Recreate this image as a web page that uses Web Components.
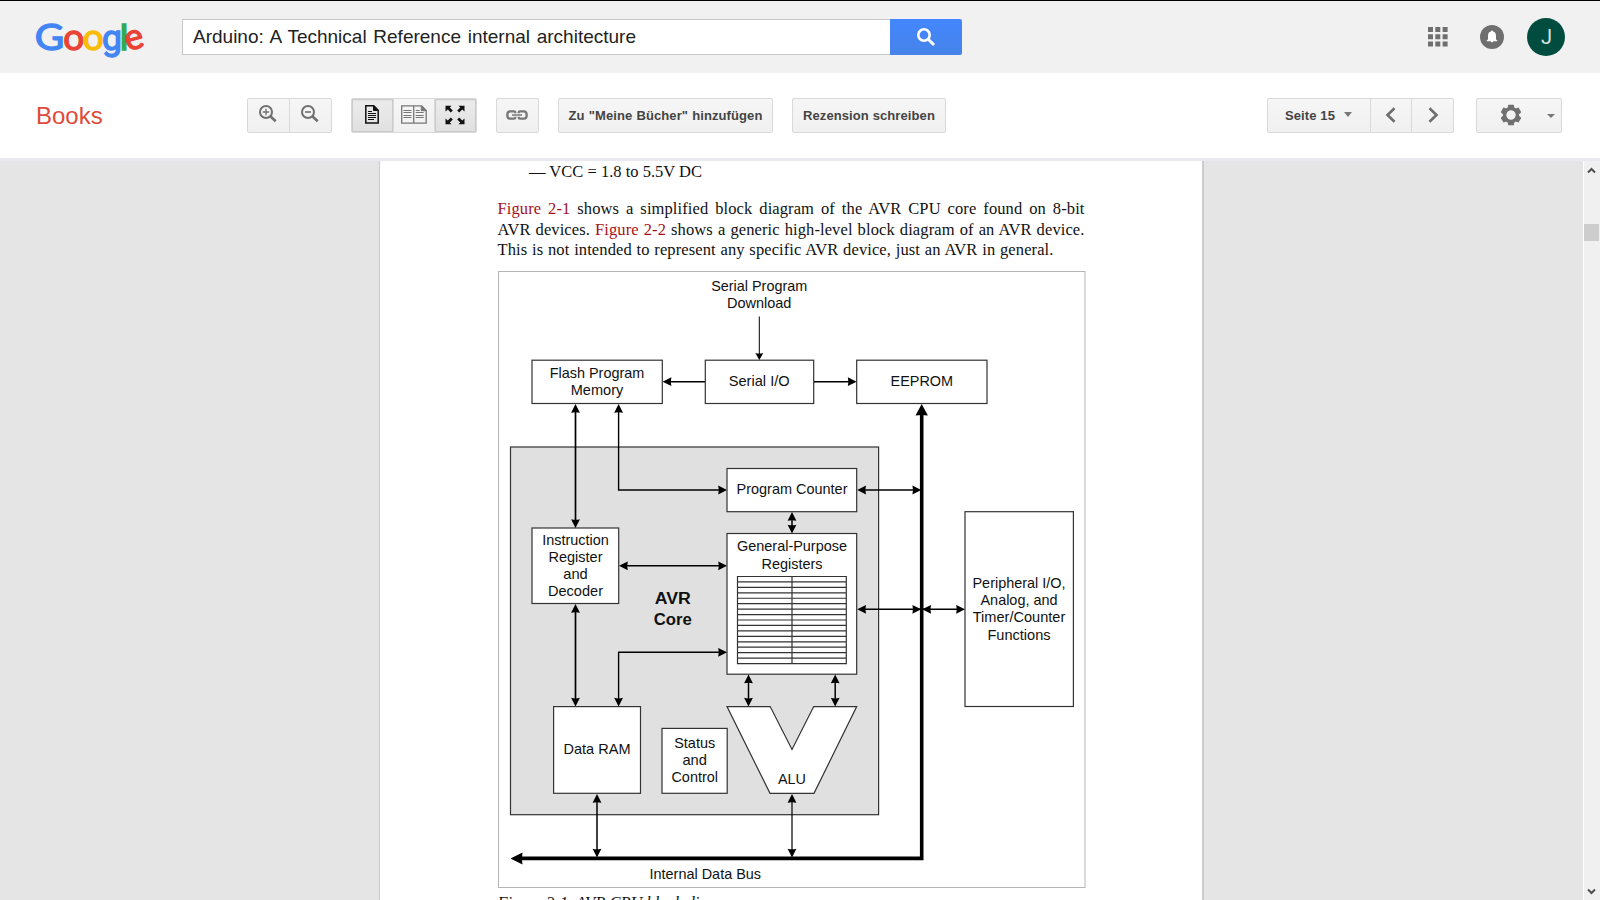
<!DOCTYPE html>
<html lang="de"><head><meta charset="utf-8"><title>Books</title>
<style>
html,body{margin:0;height:100%;overflow:hidden}
body{font-family:"Liberation Sans",Arial,sans-serif;background:#e5e5e5;color:#222}
</style></head><body>
<books-app></books-app>
<script>
const define=(name,html)=>customElements.define(name,class extends HTMLElement{
  constructor(){super();this.attachShadow({mode:'open'}).innerHTML=html;}
});

define('google-logo',`<style>:host{display:block;width:112px;height:54px;margin-top:-10px}svg{display:block;overflow:visible}text{stroke-width:1.3}</style>
<svg width="112" height="54" viewBox="34 8 112 54">
<g font-family="Lato,sans-serif" font-size="37">
<text x="34.8" y="48.600" textLength="29.5" lengthAdjust="spacingAndGlyphs" fill="#4285f4" stroke="#4285f4">G</text>
<text x="63.2" y="48.600" textLength="21" lengthAdjust="spacingAndGlyphs" fill="#ea4335" stroke="#ea4335">o</text>
<text x="82.8" y="48.600" textLength="21" lengthAdjust="spacingAndGlyphs" fill="#fbbc05" stroke="#fbbc05">o</text>
<text x="102" y="48.600" font-family="Roboto" font-size="34.5" textLength="20" lengthAdjust="spacingAndGlyphs" fill="#4285f4" stroke="#4285f4">g</text>
<text x="119.600" y="48.600" font-size="35" textLength="9" lengthAdjust="spacingAndGlyphs" fill="#34a853" stroke="#34a853">l</text>
<text transform="translate(127.500,50) rotate(-14)" font-size="36" textLength="18.5" lengthAdjust="spacingAndGlyphs" fill="#ea4335" stroke="#ea4335">e</text>
</g></svg>`);

define('search-box',`<style>:host{display:flex;width:780px;height:36px}
.q{flex:1;box-sizing:border-box;border:1px solid #c8c8c8;border-right:0;background:#fff;font-size:19px;line-height:33px;padding-left:10px;white-space:pre}
.q span{display:inline-block;width:443px;text-align-last:justify}
.b{width:72px;background:linear-gradient(#4387fd,#4683ea);border-radius:0 2px 2px 0;display:grid;place-items:center}</style>
<div class="q"><span>Arduino: A Technical Reference internal architecture</span></div>
<div class="b"><svg width="20" height="20" viewBox="0 0 20 20" fill="none" stroke="#fff"><circle cx="8" cy="8" r="5.7" stroke-width="2.6"/><path d="M12 12l6 6" stroke-width="3"/></svg></div>`);

define('top-bar',`<style>:host{box-sizing:border-box;display:flex;height:73px;background:#f1f1f1;border-top:1px solid #000;padding:18px 35px 0 34px}
search-box{margin-left:36px}.r{margin-left:auto;display:flex;height:38px;align-items:center;margin-top:-1px}
.r svg{display:block}.b{margin:0 23px 0 32px}.a{width:38px;height:38px;border-radius:50%;background:#004d40;color:#d5e3e1;font:20px/39px Roboto,sans-serif;text-align:center;text-indent:1px}</style>
<google-logo></google-logo><search-box></search-box>
<div class="r"><svg width="20" height="20" fill="#6f6f6f"><path d="M0 0h5v5H0zM7.3 0h5v5h-5zM14.6 0h5v5h-5zM0 7.3h5v5H0zM7.3 7.3h5v5h-5zM14.6 7.3h5v5h-5zM0 14.6h5v5H0zM7.3 14.6h5v5h-5zM14.6 14.6h5v5h-5z"/></svg>
<svg class="b" width="24" height="24"><circle cx="12" cy="12" r="12" fill="#6f6f6f"/><path d="M12 5.500a1 1 0 0 1 1 1c2.200.4 3 2.200 3 4.500v3.300l1.200 1.200v.8H6.800v-.8L8 14.300V11c0-2.300.8-4.100 3-4.500a1 1 0 0 1 1-1zM10.700 16h2.600a1.300 1.300 0 0 1-2.600 0z" fill="#fff"/></svg>
<div class="a">J</div></div>`);

define('tool-group',`<style>:host{box-sizing:border-box;display:flex;height:35px;border:1px solid #d9d9d9;border-radius:2px;background:linear-gradient(#f6f6f6,#f0f0f0)}</style><slot></slot>`);
define('tool-button',`<style>:host{box-sizing:border-box;display:flex;height:33px;flex:1;align-items:center;justify-content:center;color:#444;font-weight:bold;font-size:13px;letter-spacing:.1px;white-space:nowrap}
:host(:not(:first-child)){border-left:1px solid #d9d9d9}
:host([on]){background:linear-gradient(#ececec,#e0e0e0);box-shadow:inset 0 0 0 1px #ccc,inset 0 1px 2px #0002}</style><slot></slot>`);

define('tool-bar',`<style>:host{box-sizing:border-box;display:flex;height:88px;background:#fff;padding:25px 38px 0 36px;border-bottom:3px solid #e9e9ef}
h1{margin:0;width:211px;font:24px/35px "Liberation Sans";color:#dd4b39;letter-spacing:0}
svg{display:block}tool-group{flex:none}.t{display:inline-block;text-align-last:justify;margin-top:-1px}</style>
<h1>Books</h1>
<tool-group style="width:85px"><tool-button><svg width="20" height="20" viewBox="0 0 20 20" fill="none" stroke="#707070" style="margin:-3px 1px 0 0"><circle cx="8" cy="8" r="6" stroke-width="2"/><path d="M12.300 12.300l5.400 5" stroke-width="2.600"/><path d="M4.800 8h6.400M8 4.800v6.400" stroke-width="1.300"/></svg></tool-button>
<tool-button><svg width="20" height="20" viewBox="0 0 20 20" fill="none" stroke="#707070" style="margin:-3px 1px 0 0"><circle cx="8" cy="8" r="6" stroke-width="2"/><path d="M12.300 12.300l5.400 5" stroke-width="2.600"/><path d="M5 8h6" stroke-width="1.600"/></svg></tool-button></tool-group>
<tool-group style="width:126px;margin-left:19px"><tool-button on><svg width="14" height="19" viewBox="0 0 14 19" fill="none" stroke="#111" style="margin-top:-2px"><path d="M.8.8h8l4.400 4.400V18H.8z" stroke-width="1.500"/><path d="M8.500 1v4.500H13z" fill="#111"/><path d="M3 6.500h4M3 8.500h8M3 10.500h8M3 12.500h8M3 14.500h6"/></svg></tool-button>
<tool-button><svg width="26" height="19" viewBox="0 0 26 19" fill="none" stroke="#777" style="margin:-2px 1px 0 0"><path d="M.7.8h12v17.400H.7zM12.700.8h8l4.500 4.700v12.700H12.700z" stroke-width="1.300"/><path d="M20.300 1v4.700h5z" fill="#777"/><path d="M2.500 5.500h8M2.500 7.500h8M2.500 10.500h8M2.500 12.500h8M14.700 5.500h4M14.700 7.500h8M14.700 10.500h8M14.700 12.500h8"/></svg></tool-button>
<tool-button on><svg width="20" height="20" viewBox="0 0 20 20" fill="#111" style="margin:-2px 1px 0 0"><path d="M.5.800h6L4.800 2.600l3 3-2 2-3-3L.500 6.500zM19.500.800h-6l1.700 1.800-3 3 2 2 3-3 2.300 1.900zM.5 19.200h6l-1.700-1.800 3-3-2-2-3 3-2.300-1.900zM19.500 19.200h-6l1.700-1.800-3-3 2-2 3 3 2.300-1.900z"/></svg></tool-button></tool-group>
<tool-group style="width:43px;margin-left:19px"><tool-button><svg width="22" height="10" viewBox="0 0 22 10" fill="none" stroke="#777" stroke-width="2.300" style="margin:-2px 1px 0 0"><path d="M9.300 3.300V2.500Q9.300 1.300 8 1.300H4Q1.300 1.300 1.300 5T4 8.700H8Q9.300 8.700 9.300 7.500V6.700M12.700 3.300V2.500Q12.700 1.300 14 1.300H18Q20.700 1.300 20.700 5T18 8.700H14Q12.700 8.700 12.700 7.500V6.700"/><path d="M6 5h10" stroke-width="1.500"/></svg></tool-button></tool-group>
<tool-group style="width:215px;margin-left:19px"><tool-button><span class="t" style="width:194px">Zu "Meine Bücher" hinzufügen</span></tool-button></tool-group>
<tool-group style="width:154px;margin-left:19px"><tool-button><span class="t" style="width:132px">Rezension schreiben</span></tool-button></tool-group>
<tool-group style="width:187px;margin-left:auto"><tool-button style="flex:0 0 102px"><span class="t" style="width:50px">Seite 15</span><svg width="8" height="5" fill="#777" style="margin:-3px 1px 0 9px"><path d="M0 0h8L4 5z"/></svg></tool-button>
<tool-button style="flex:0 0 41px"><svg width="11" height="16" fill="none" stroke="#6d6d6d" stroke-width="2.600" style="margin:-2px 2px 0 0"><path d="M9.500 1.200L2.500 8l7 6.800"/></svg></tool-button>
<tool-button><svg width="11" height="16" fill="none" stroke="#6d6d6d" stroke-width="2.600" style="margin:-2px 0 0 1px"><path d="M1.500 1.200L8.500 8l-7 6.800"/></svg></tool-button></tool-group>
<tool-group style="width:86px;margin-left:22px"><tool-button style="justify-content:flex-start"><svg width="20" height="22" viewBox="-10 -11 20 22" style="margin:-2px 0 0 24px"><g fill="#707070"><path d="M-2.800-10.300h5.600l.7 4h-7z"/><path d="M-2.800-10.300h5.600l.7 4h-7z" transform="rotate(60)"/><path d="M-2.800-10.300h5.600l.7 4h-7z" transform="rotate(120)"/><path d="M-2.800-10.300h5.600l.7 4h-7z" transform="rotate(180)"/><path d="M-2.800-10.300h5.600l.7 4h-7z" transform="rotate(240)"/><path d="M-2.800-10.300h5.600l.7 4h-7z" transform="rotate(300)"/></g><circle r="6.300" fill="none" stroke="#707070" stroke-width="3.600"/><circle r="4.500" fill="#f3f3f3"/></svg><svg width="8" height="4" fill="#777" style="margin:1px 0 0 26px"><path d="M0 0h8L4 4z"/></svg></tool-button></tool-group>`);

function head(x,y,dir,l=8.800,w=4.400){const r={l:0,u:90,r:180,d:270}[dir];
  return `<path transform="translate(${x},${y}) rotate(${r})" d="M0 0L${l} ${-w}Q${l-1.200} 0 ${l} ${w}z" fill="#000" stroke="none"/>`;}
function link(d,heads,w=1.500){return `<path d="${d}" fill="none" stroke="#000" stroke-width="${w}"/>`+heads.map(h=>head(...h)).join('');}
function box(x,y,x2,y2,fill='#fff'){return `<rect x="${x}" y="${y}" width="${x2-x}" height="${y2-y}" fill="${fill}"/>`;}
function label(t,cx,y,w,size=15,extra=''){return `<text x="${cx-w/2}" y="${y-.2}" textLength="${w}" lengthAdjust="spacingAndGlyphs" font-size="${size}" ${extra}>${t}</text>`;}
let rows='';for(let i=1;i<16;i++)rows+=`M737.500 ${576.500+i*5.440}H846.300`;
define('block-diagram',`<style>:host{display:block;width:588px;height:617px}svg{display:block}text{fill:#111;stroke:none;font-family:"Liberation Sans",Arial,sans-serif}</style>
<svg width="588" height="617" viewBox="498 271 588 617"><g stroke="#333" stroke-width="1.200">
<rect x="498.500" y="271.500" width="586.500" height="616" fill="#fff" stroke="#b5b5b5" stroke-width="1"/>
${box(510.500,447,878.600,814.700,'#e0e0e0')}
${box(532,360.200,662.300,403.500)}${box(705.300,360.200,813.700,403.500)}${box(856.700,360.200,987,403.500)}
${box(727,468.500,856.700,511.700)}${box(727,533.500,856.700,674.200)}${box(532,528,618.700,603.500)}
${box(553.600,706.600,640.500,793.300)}${box(662,728.400,727.200,793.300)}${box(965,511.700,1073.400,706.500)}
<path d="M727 706.600H770.200L792 749.500 813.700 706.600H856.700L814 793.300H770z" fill="#fff"/>
<path d="M737.500 576.500H846.300V663.600H737.500zM792 576.500V663.600${rows}" fill="none"/></g>
${link('M759.300 316.500V354',[[759.300,360,'d',7,4]],1)}
${link('M705 381.700H667',[[662.600,381.700,'l']],1.600)}${link('M814 381.700H852',[[856.600,381.700,'r']],1.600)}
${link('M575.500 408V523',[[575.500,404,'u'],[575.500,528,'d']],1.700)}
${link('M618.600 408V490H722',[[618.600,404,'u'],[727,490,'r']],1.400)}
${link('M623 565.800H722',[[619,565.800,'l'],[727,565.800,'r']],1.400)}
${link('M575.500 608V702',[[575.500,604,'u'],[575.500,706.600,'d']],1.700)}
${link('M722 652.300H618.600V702',[[727,652.300,'r'],[618.600,706.600,'d']],1.400)}
${link('M597 798V853',[[597,794,'u'],[597,857.500,'d']],1.500)}
${link('M792 798V853',[[792,794,'u'],[792,857.500,'d']],1.200)}
${link('M748.500 679V702',[[748.500,674.500,'u'],[748.500,706.600,'d']])}${link('M835.200 679V702',[[835.200,674.500,'u'],[835.200,706.600,'d']])}
${link('M792 517V528',[[792,512,'u'],[792,533.500,'d']])}
${link('M862 490H916',[[857.200,490,'l'],[921.200,490,'r']])}
${link('M862 609.300H960',[[857.200,609.300,'l'],[921.200,609.300,'r'],[922.200,609.300,'l'],[965,609.300,'r']])}
${link('M921.700 412V858.400H520',[[921.700,404,'u',11.500,6.200],[510.500,858.400,'l',12,6]],3.600)}
${label('Serial Program',759.200,291,96)}${label('Download',759.200,308.500,64.500)}
${label('Flash Program',597,378,94.500)}${label('Memory',597,395.200,52.500)}
${label('Serial I/O',759.200,386.200,61)}${label('EEPROM',921.800,386.200,62.500)}
${label('Program Counter',792,494.500,111)}
${label('General-Purpose',792,551.500,110)}${label('Registers',792,568.800,61)}
${label('Instruction',575.500,544.700,66.500)}${label('Register',575.500,562,54)}${label('and',575.500,579.300,24.500)}${label('Decoder',575.500,596.500,55)}
${label('AVR',672.800,604.300,36,16.800,'font-weight="bold"')}${label('Core',672.800,624.700,38,16.800,'font-weight="bold"')}
${label('Data RAM',597,754.300,67)}
${label('Status',694.700,748,41)}${label('and',694.700,765.500,24.500)}${label('Control',694.700,782.500,46.500)}
${label('ALU',792,784,28)}
${label('Peripheral I/O,',1019,588,93)}${label('Analog, and',1019,605,77)}${label('Timer/Counter',1019,622.300,92.500)}${label('Functions',1019,639.700,63)}
${label('Internal Data Bus',705.300,879,111.500)}
</svg>`);

define('scroll-bar',`<style>:host{box-sizing:border-box;display:flex;flex-direction:column;width:17px;height:739px;background:#f0f0f0;border-left:1px solid #fff}
.t{height:17px;width:15px;background:#cdcdcd;margin-top:49px}svg{display:block;margin:6px 0 0 3px}svg:last-child{margin:auto 0 4px 3px}</style>
<svg width="9" height="8" fill="none" stroke="#505050" stroke-width="2"><path d="M1 5.500L4.500 2 8 5.500"/></svg><div class="t"></div>
<svg width="9" height="8" fill="none" stroke="#505050" stroke-width="2"><path d="M1 1.500L4.500 5 8 1.500"/></svg>`);

define('page-text',`<style>:host{display:block;width:587px;letter-spacing:.1px}p{margin:0;white-space:nowrap;line-height:20.500px;height:20.500px;text-align-last:justify}b{font-weight:normal;color:#a5121a}</style>
<p><b>Figure 2-1</b> shows a simplified block diagram of the AVR CPU core found on 8-bit</p>
<p>AVR devices. <b>Figure 2-2</b> shows a generic high-level block diagram of an AVR device.</p>
<p style="width:556px">This is not intended to represent any specific AVR device, just an AVR in general.</p>`);
define('book-sheet',`<style>:host{box-sizing:border-box;display:block;width:825px;height:739px;overflow:hidden;background:#fff;border-left:1px solid #ccc;border-right:2px solid #ccc;padding-left:117.500px;font-family:"Liberation Serif",serif;font-size:16.500px;color:#111}
.v{white-space:nowrap;width:173px;height:20px;line-height:20px;text-align-last:justify;margin:1px 0 17px 31.500px}
block-diagram{margin:10.500px 0 0 .500px}.c{font-style:italic;line-height:20px;margin-top:5px;width:230px;white-space:nowrap}</style>
<div class="v">— VCC = 1.8 to 5.5V DC</div><page-text></page-text><block-diagram></block-diagram><div class="c">Figure 2-1. AVR CPU block diagram</div>`);
define('books-app',`<style>:host{display:block;height:900px;overflow:hidden}main{display:flex;height:739px;background:#e5e5e5;padding-left:379px}scroll-bar{margin-left:auto}</style>
<top-bar></top-bar><tool-bar></tool-bar><main><book-sheet></book-sheet><scroll-bar></scroll-bar></main>`);
</script></body></html>
